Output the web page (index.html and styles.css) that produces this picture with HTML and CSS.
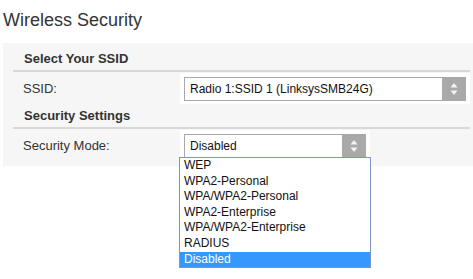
FILE: index.html
```html
<!DOCTYPE html>
<html lang="en">
<head>
    <meta charset="UTF-8">
    <meta name="viewport" content="width=device-width, initial-scale=1.0">
    <title>Wireless Security</title>
    <link rel="stylesheet" href="styles.css">
</head>
<body>
    <h1 class="page-title">Wireless Security</h1>
    <div class="panel">
        <div class="section-title">Select Your SSID</div>
        <div class="form-row">
            <label class="form-label">SSID:</label>
            <div class="field field-wide">
                <div class="select-box">
                    <span class="select-value">Radio 1:SSID 1 (LinksysSMB24G)</span>
                    <span class="select-arrow">
                        <svg width="8" height="12" viewBox="0 0 8 12"><polygon points="4,0 7.5,4.5 0.5,4.5" fill="#f4f4f4"/><polygon points="0.5,7.5 7.5,7.5 4,12" fill="#f4f4f4"/></svg>
                    </span>
                </div>
            </div>
        </div>

        <div class="section-title">Security Settings</div>
        <div class="form-row">
            <label class="form-label">Security Mode:</label>
            <div class="field field-narrow">
                <div class="select-box">
                    <span class="select-value">Disabled</span>
                    <span class="select-arrow">
                        <svg width="8" height="12" viewBox="0 0 8 12"><polygon points="4,0 7.5,4.5 0.5,4.5" fill="#f4f4f4"/><polygon points="0.5,7.5 7.5,7.5 4,12" fill="#f4f4f4"/></svg>
                    </span>
                </div>
                <ul class="option-list">
                    <li>WEP</li>
                    <li>WPA2-Personal</li>
                    <li>WPA/WPA2-Personal</li>
                    <li>WPA2-Enterprise</li>
                    <li>WPA/WPA2-Enterprise</li>
                    <li>RADIUS</li>
                    <li class="selected">Disabled</li>
                </ul>
            </div>
        </div>
    </div>
</body>
</html>
```

FILE: styles.css
```css
html, body {
    min-height: 279px;
}
body {
    font-family: "Liberation Sans", Arial, sans-serif;
    margin: 0;
    background-color: #fff;
    color: #333;
}
.page-title {
    font-size: 18px;
    font-weight: normal;
    line-height: 22px;
    margin: 9px 0 12px 3px;
    color: #333;
}
.panel {
    margin-left: 3px;
    background-color: #f6f6f6;
    padding: 4px 3px 5px 10px;
}
.section-title {
    font-size: 13px;
    font-weight: bold;
    line-height: 23px;
    padding-left: 11px;
    border-bottom: 2px solid #d8d8d8;
}
.form-row {
    display: flex;
    align-items: center;
    padding-top: 1px;
}
.form-label {
    width: 157px;
    padding-left: 10px;
    font-size: 13px;
}
.field {
    position: relative;
    background-color: #fff;
    padding: 4px 4px 3px 4px;
    box-sizing: border-box;
}
.field-wide {
    width: 290px;
}
.field-narrow {
    width: 190px;
}
.select-box {
    display: flex;
    height: 24px;
    border: 1px solid #a9a9a9;
    box-sizing: border-box;
    background-color: #fff;
}
.select-value {
    flex-grow: 1;
    font-size: 12px;
    line-height: 22px;
    padding-left: 5px;
    color: #111;
}
.select-arrow {
    display: flex;
    align-items: center;
    justify-content: center;
    width: 23px;
    background-color: #a9a9a9;
}
.option-list {
    position: absolute;
    top: 27px;
    left: -1px;
    width: 192px;
    margin: 0;
    padding: 0;
    list-style: none;
    background-color: #fff;
    border: 1px solid #7a96c8;
    box-sizing: border-box;
}
.option-list li {
    font-size: 12px;
    line-height: 15.6px;
    padding-left: 4px;
    color: #111;
}
.option-list li.selected {
    background-color: #3399ff;
    color: #fff;
}
```
